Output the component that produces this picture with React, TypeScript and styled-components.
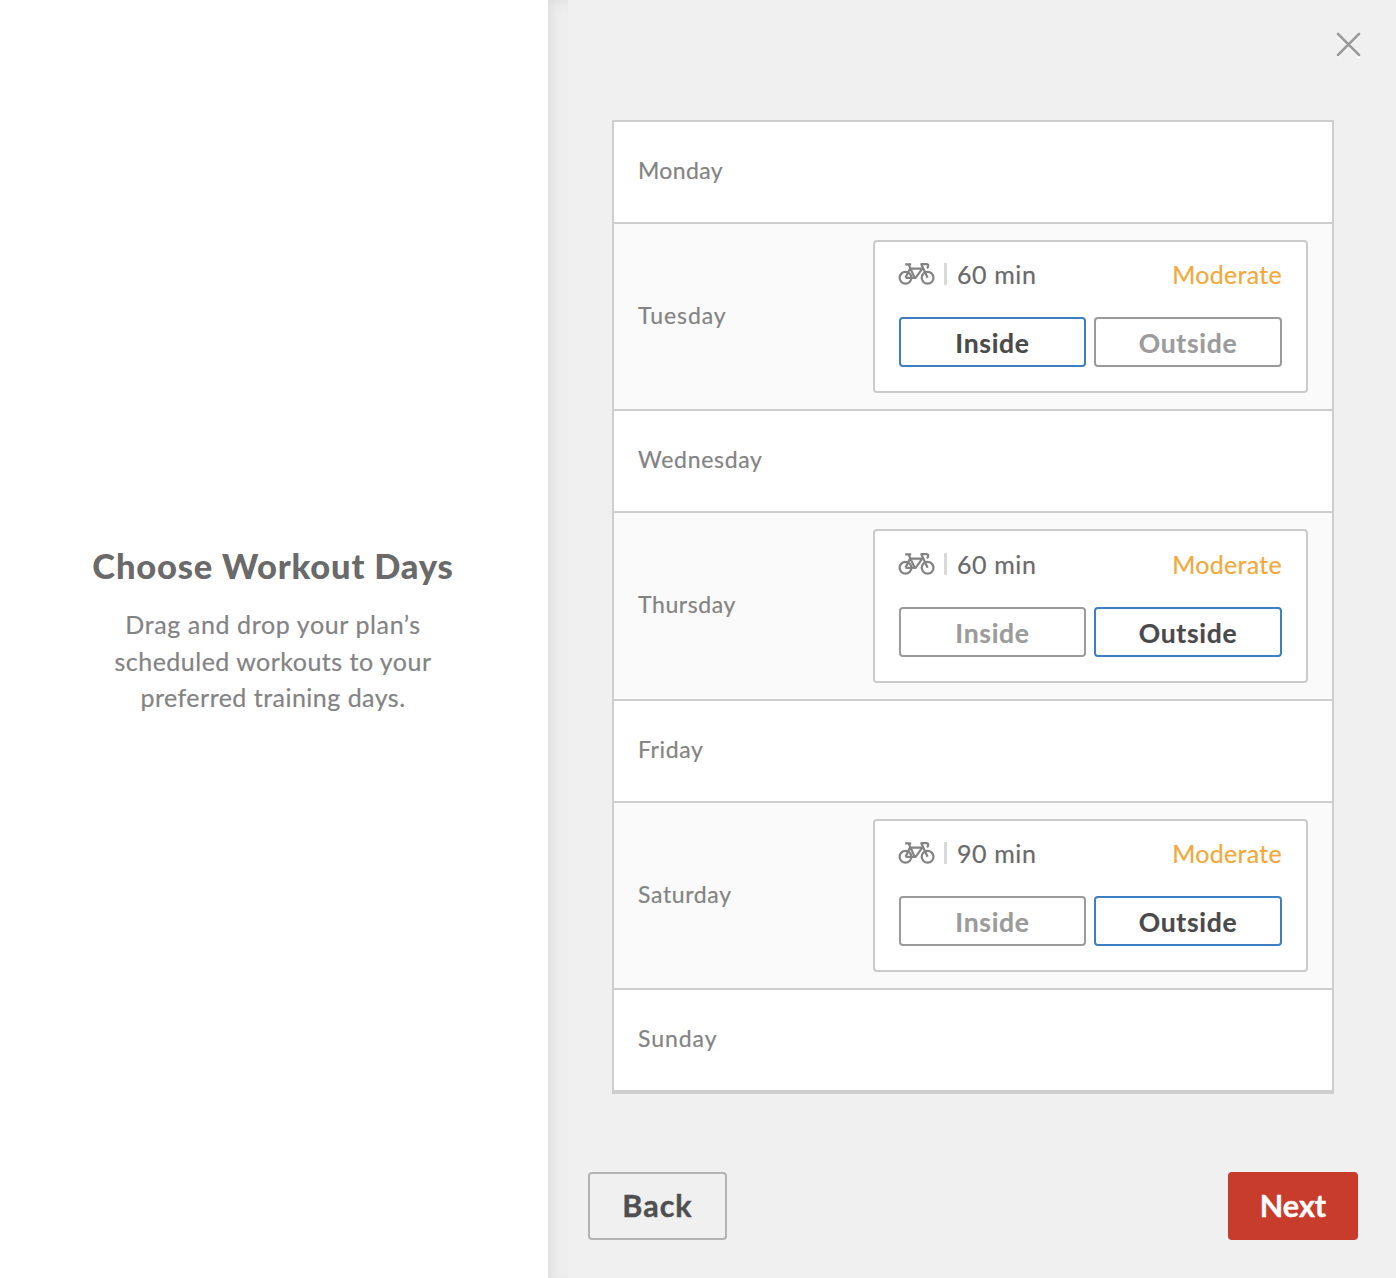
import React, { useState } from "react";
import styled, { createGlobalStyle } from "styled-components";

const GlobalStyle = createGlobalStyle`
  * { box-sizing: border-box; }
  body { margin: 0; background: #fff; font-family: Lato, "Liberation Sans", sans-serif; }
  h1, p { margin: 0; }
  button { font: inherit; cursor: pointer; }
`;

const Page = styled.div`
  display: flex;
  height: 1278px;
  width: 1396px;
  overflow: hidden;
`;

const Intro = styled.aside`
  width: 548px;
  flex: none;
  display: flex;
  flex-direction: column;
  align-items: center;
  padding: 544px 2px 0 0;
  text-align: center;
`;

const Title = styled.h1`
  font-size: 34.5px;
  line-height: 44px;
  font-weight: 900;
  letter-spacing: 0.8px;
  color: #6a6a6a;
  white-space: nowrap;
`;

const Lead = styled.p`
  margin-top: 18px;
  font-size: 25px;
  line-height: 36.5px;
  color: #838383;
  -webkit-text-stroke: 0.2px currentColor;
`;

const LeadLine = styled.span<{ $spacing: number }>`
  display: block;
  white-space: nowrap;
  letter-spacing: ${(p) => p.$spacing}px;
`;

const Edge = styled.div`
  width: 20px;
  flex: none;
  background: #eeeeee;
  box-shadow: inset 6px 4px 14px -4px rgba(0, 0, 0, 0.08);
`;

const Main = styled.main`
  flex: 1;
  display: flex;
  flex-direction: column;
  background: #f0f0f0;
`;

const TopBar = styled.header`
  height: 120px;
  display: flex;
  justify-content: flex-end;
  align-items: flex-start;
  padding: 32px 35.5px 0 0;
`;

const CloseButton = styled.button`
  border: 0;
  padding: 0;
  background: none;
  line-height: 0;
`;

const Week = styled.div`
  margin-left: 44px;
  width: 722px;
  border: 2px solid #cecece;
  border-bottom-width: 4px;
`;

const DayRow = styled.div<{ $height: number; $shaded: boolean }>`
  height: ${(p) => p.$height}px;
  display: flex;
  align-items: center;
  justify-content: space-between;
  padding: 0 24px;
  background: ${(p) => (p.$shaded ? "#fafafa" : "#fff")};
  & + & { border-top: 2px solid #cecece; }
`;

const DayName = styled.span<{ $spacing: number }>`
  padding-bottom: 4px;
  font-size: 23px;
  line-height: 32px;
  color: #838383;
  letter-spacing: ${(p) => p.$spacing}px;
  -webkit-text-stroke: 0.2px currentColor;
`;

const Card = styled.section<{ $height: number }>`
  display: flex;
  flex-direction: column;
  justify-content: flex-end;
  width: 435px;
  height: ${(p) => p.$height}px;
  padding: 0 24px 24px;
  border: 2px solid #cbcbcb;
  border-radius: 4px;
  background: #fff;
`;

const CardHead = styled.div`
  display: flex;
  align-items: center;
  height: 38px;
  font-size: 25px;
  -webkit-text-stroke: 0.2px;
`;

const Divider = styled.span`
  width: 3px;
  height: 22px;
  margin: 0 10px 0 9px;
  background: #dadada;
`;

const Duration = styled.span`
  color: #6a6a6a;
  letter-spacing: 0.6px;
`;

const Level = styled.span`
  margin-left: auto;
  letter-spacing: 0.3px;
  color: #f2a93b;
`;

const Choices = styled.div`
  display: grid;
  grid-template-columns: 187px 188px;
  gap: 8px;
  margin-top: 24px;
`;

const Choice = styled.button<{ $active: boolean }>`
  height: 50px;
  padding: 1px 0 0;
  border: 2px solid ${(p) => (p.$active ? "#3f7fc1" : "#9b9b9b")};
  border-radius: 4px;
  background: #fff;
  color: ${(p) => (p.$active ? "#4a4a4a" : "#9b9b9b")};
  font-size: 26.5px;
  font-weight: 700;
  letter-spacing: 0.7px;
  -webkit-text-stroke: 0.2px currentColor;
`;

const Footer = styled.footer`
  display: flex;
  justify-content: space-between;
  padding: 78px 38px 0 20px;
`;

const NavButton = styled.button<{ $primary?: boolean }>`
  width: ${(p) => (p.$primary ? 130 : 139)}px;
  height: 68px;
  padding: 0 0 3px;
  border: ${(p) => (p.$primary ? "0" : "2px solid #b3b3b3")};
  border-radius: 4px;
  background: ${(p) => (p.$primary ? "#c83c2c" : "#f0f0f0")};
  color: ${(p) => (p.$primary ? "#fff" : "#4f4f4f")};
  font-size: 30.5px;
  font-weight: 700;
  letter-spacing: ${(p) => (p.$primary ? 0 : 1)}px;
  -webkit-text-stroke: 0.4px currentColor;
`;

const BikeSvg = styled.svg`
  flex: none;
  margin-left: -1px;
`;

const BikeIcon = () => (
  <BikeSvg width="37" height="24" viewBox="0 0 37 24" fill="none" stroke="#838383" strokeWidth="2.2">
    <circle cx="7.5" cy="15.8" r="5.9" />
    <circle cx="29.6" cy="15.8" r="5.9" />
    <path
      d="M7.5 15.8 12 6.6H24.300L17.600 15.8H7.500M7.200 2.400h6M10.600 2.400 16.600 15.800M29.600 15.800 23.300 2.200h5.200c2.200 0 2.400 3 .2 3.800"
      strokeLinejoin="round"
    />
  </BikeSvg>
);

const CloseIcon = () => (
  <svg width="25" height="26" viewBox="0 0 25 26" fill="none" strokeLinecap="round" strokeWidth="2.6">
    <path d="M2 3.500 23 24.500M23 3.500 2 24.500" stroke="#fff" />
    <path d="M2 2 23 23M23 2 2 23" stroke="#9b9b9b" />
  </svg>
);

type Place = "Inside" | "Outside";

const WorkoutCard = ({ minutes, initial, height }: { minutes: number; initial: Place; height: number }) => {
  const [place, setPlace] = useState<Place>(initial);
  return (
    <Card $height={height}>
      <CardHead>
        <BikeIcon />
        <Divider />
        <Duration>{minutes} min</Duration>
        <Level>Moderate</Level>
      </CardHead>
      <Choices>
        {(["Inside", "Outside"] as Place[]).map((p) => (
          <Choice key={p} $active={p === place} onClick={() => setPlace(p)}>{p}</Choice>
        ))}
      </Choices>
    </Card>
  );
};

const days: { name: string; height: number; spacing: number; workout?: { minutes: number; initial: Place; height: number } }[] = [
  { name: "Monday", height: 100, spacing: 0.35 },
  { name: "Tuesday", height: 187, spacing: 0.95, workout: { minutes: 60, initial: "Inside", height: 153 } },
  { name: "Wednesday", height: 102, spacing: 0.7 },
  { name: "Thursday", height: 188, spacing: 0.6, workout: { minutes: 60, initial: "Outside", height: 154 } },
  { name: "Friday", height: 102, spacing: 0.6 },
  { name: "Saturday", height: 187, spacing: 0.65, workout: { minutes: 90, initial: "Outside", height: 153 } },
  { name: "Sunday", height: 102, spacing: 0.95 },
];

export default function App() {
  return (
    <Page>
      <GlobalStyle />
      <Intro>
        <Title>Choose Workout Days</Title>
        <Lead>
          <LeadLine $spacing={0.62}>Drag and drop your plan’s</LeadLine>
          <LeadLine $spacing={0.48}>scheduled workouts to your</LeadLine>
          <LeadLine $spacing={0.48}>preferred training days.</LeadLine>
        </Lead>
      </Intro>
      <Edge />
      <Main>
        <TopBar>
          <CloseButton aria-label="Close"><CloseIcon /></CloseButton>
        </TopBar>
        <Week>
          {days.map((d) => (
            <DayRow key={d.name} $height={d.height} $shaded={!!d.workout}>
              <DayName $spacing={d.spacing}>{d.name}</DayName>
              {d.workout && <WorkoutCard {...d.workout} />}
            </DayRow>
          ))}
        </Week>
        <Footer>
          <NavButton>Back</NavButton>
          <NavButton $primary>Next</NavButton>
        </Footer>
      </Main>
    </Page>
  );
}
